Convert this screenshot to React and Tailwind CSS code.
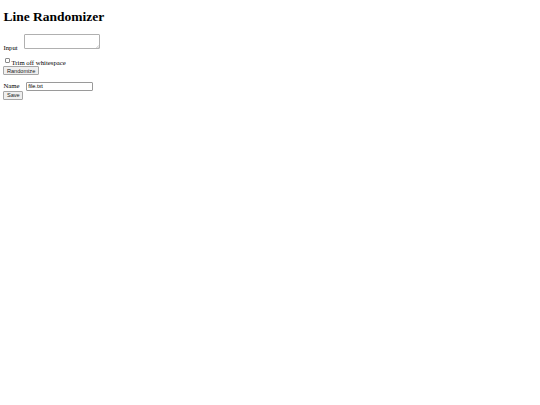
import React from 'react';

const btn = "block h-[9px] px-[2.5px] font-['Liberation_Sans',Arial,sans-serif] text-[5.625px] leading-[normal] text-[#222] bg-[#efefef] border border-[#a6a6a6] rounded-[1px]";

export default function App() {
  return (
    <div className="px-[3.4px] pt-[9px] font-['Liberation_Serif','Times_New_Roman',serif] text-[6.75px] leading-[normal] text-black bg-white min-h-screen">
      <h1 className="text-[13.5px] font-bold leading-[normal] mb-[9.05px]">Line Randomizer</h1>

      <div className="flex items-end gap-[6.4px]">
        <label htmlFor="input">Input</label>
        <span className="relative block mb-[1.5px]">
          <textarea
            id="input"
            className="block w-[76.4px] h-[15.3px] border border-[#b0b0b0] rounded-[1px] bg-white resize-none"
          />
          {/* tiny resize grip */}
          <svg className="absolute right-[1px] bottom-[1px]" width="3" height="3" viewBox="0 0 3 3">
            <path d="M0.3 3 L3 0.3 M1.8 3 L3 1.8" stroke="#9a9a9a" strokeWidth="0.5" />
          </svg>
        </span>
      </div>

      <div className="flex items-end mt-[7.4px]">
        <input
          id="trim"
          type="checkbox"
          className="appearance-none m-0 w-[5px] h-[5px] ml-[1.7px] mr-[1.3px] mb-[3.1px] border border-[#8a8a8a] rounded-[1px] bg-white"
        />
        <label htmlFor="trim">Trim off whitespace</label>
      </div>
      <button className={btn}>Randomize</button>

      <div className="flex items-baseline gap-[6.4px] mt-[6.4px]">
        <label htmlFor="name">Name</label>
        <input
          id="name"
          type="text"
          defaultValue="file.txt"
          className="w-[67px] h-[9px] px-[1.3px] border border-[#9a9a9a] rounded-[1px] bg-white font-['Liberation_Sans',Arial,sans-serif] text-[5.625px] leading-[normal]"
        />
      </div>
      <button className={btn}>Save</button>
    </div>
  );
}
